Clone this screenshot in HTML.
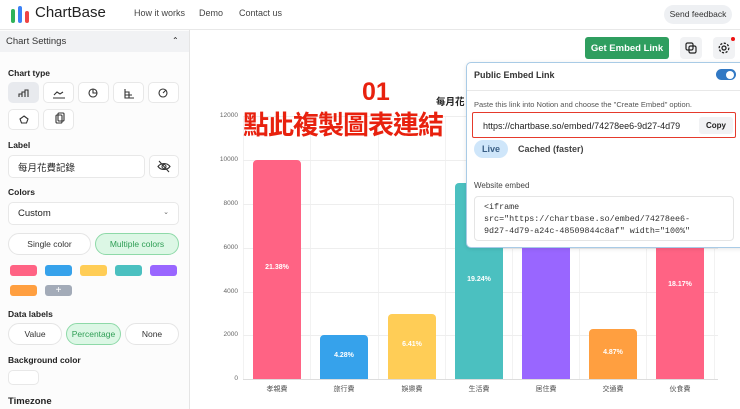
<!DOCTYPE html><html><head><meta charset="utf-8"><style>
*{box-sizing:border-box;margin:0;padding:0}
body{width:740px;height:409px;overflow:hidden;background:#fff;font-family:"Liberation Sans","Noto Sans CJK TC",sans-serif;color:#222;position:relative}
.a{position:absolute}
.hdr{top:0;left:0;width:740px;height:30px;border-bottom:1px solid #e8e8e8;background:#fff}
.nav{font-size:9px;color:#444;top:8px}
.side{top:30px;left:0;width:190px;height:379px;background:#fcfcfc;border-right:1px solid #e5e5e5}
.lbl{font-size:8.5px;font-weight:bold;color:#222;left:8px}
.box{background:#fff;border:1px solid #e8e8e8;border-radius:5px}
.ic{width:31px;height:21px}
.sw{width:27px;height:11px;border-radius:3px}
.pill{border:1px solid #e5e5e5;border-radius:12px;background:#fff;font-size:8.5px;color:#333;text-align:center;line-height:20px;height:22px}
.pg{background:#dcf7e5;border-color:#8ed9a8;color:#2f9e55}
.yl{font-size:6.5px;color:#666;text-align:right;width:30px;left:208px}
.gl{left:243px;width:475px;height:1px;background:#eee}
.vl{top:116px;width:1px;height:263px;background:#f2f2f2}
.bar{border-radius:4px 4px 0 0;color:#fff;font-size:7px;font-weight:bold;text-align:center}
.xl{font-size:7px;color:#555;top:384px;width:60px;text-align:center}
</style></head><body>
<div class="a hdr"></div>
<svg class="a" style="left:10px;top:6px" width="20" height="18"><rect x="1" y="3" width="4" height="14" rx="2" fill="#2fb35a"/><rect x="8" y="0" width="4" height="17" rx="2" fill="#3b82f6"/><rect x="15" y="5" width="4" height="12" rx="2" fill="#ef4444"/></svg>
<div class="a" style="left:35px;top:4px;font-size:15px;color:#222">ChartBase</div>
<div class="a nav" style="left:134px">How it works</div>
<div class="a nav" style="left:199px">Demo</div>
<div class="a nav" style="left:239px">Contact us</div>
<div class="a" style="left:664px;top:5px;width:68px;height:19px;border-radius:10px;background:#eef0f3;font-size:8.5px;color:#333;text-align:center;line-height:19px">Send feedback</div>

<div class="a side"></div>
<div class="a" style="left:0;top:31px;width:189px;height:21px;background:#f1f2f4"></div>
<div class="a" style="left:6px;top:36px;font-size:9.5px;color:#333">Chart Settings</div>
<div class="a" style="left:172px;top:36px;font-size:8px">&#8963;</div>
<div class="a lbl" style="top:68px">Chart type</div>
<div class="a box ic" style="left:8px;top:82px;background:#e8eaee;border-color:#e8eaee"></div>
<div class="a box ic" style="left:43px;top:82px"></div>
<div class="a box ic" style="left:78px;top:82px"></div>
<div class="a box ic" style="left:113px;top:82px"></div>
<div class="a box ic" style="left:148px;top:82px"></div>
<div class="a box ic" style="left:8px;top:109px"></div>
<div class="a box ic" style="left:43px;top:109px"></div>
<svg class="a" style="left:0;top:80px" width="190" height="55" fill="none" stroke="#333" stroke-width="1.1"><path d="M19 17v-3h3v3M22 17v-5h3v5M25 17v-7h3v7"/><path d="M54 15l3-3 3 2 3-2M53 18h12"/><circle cx="93" cy="13" r="4"/><path d="M93 9v4h4"/><path d="M125 9v9h9M125 12h4v6M125 15h7"/><circle cx="163" cy="13" r="4"/><path d="M163 13l3-3"/><path d="M24 36l4 3-1.5 4h-5L20 39z"/><rect x="56" y="35" width="6" height="8" rx="1"/><rect x="58" y="33" width="6" height="8" rx="1"/></svg>
<div class="a lbl" style="top:140px">Label</div>
<div class="a box" style="left:8px;top:155px;width:137px;height:23px;font-size:9.5px;padding:4px 9px">每月花費記錄</div>
<div class="a box" style="left:149px;top:155px;width:30px;height:23px"></div>
<svg class="a" style="left:157px;top:160px" width="14" height="13" fill="none" stroke="#333" stroke-width="1.1"><path d="M1 6.5c3-4 9-4 12 0c-3 4-9 4-12 0z"/><circle cx="7" cy="6.5" r="2"/><path d="M2 1l10 11"/></svg>
<div class="a lbl" style="top:187px">Colors</div>
<div class="a box" style="left:8px;top:202px;width:171px;height:23px;font-size:9.5px;padding:5px 9px">Custom<span style="float:right;font-size:7px;color:#666">&#8964;</span></div>
<div class="a pill" style="left:8px;top:233px;width:83px">Single color</div>
<div class="a pill pg" style="left:95px;top:233px;width:84px">Multiple colors</div>
<div class="a sw" style="left:10px;top:265px;background:#ff6384"></div>
<div class="a sw" style="left:45px;top:265px;background:#36a2eb"></div>
<div class="a sw" style="left:80px;top:265px;background:#ffcd56"></div>
<div class="a sw" style="left:115px;top:265px;background:#4bc0c0"></div>
<div class="a sw" style="left:150px;top:265px;background:#9966ff"></div>
<div class="a sw" style="left:10px;top:285px;background:#ff9f40"></div>
<div class="a sw" style="left:45px;top:285px;background:#a3abb8;color:#fff;font-size:10px;text-align:center;line-height:11px">+</div>
<div class="a lbl" style="top:309px">Data labels</div>
<div class="a pill" style="left:8px;top:323px;width:54px">Value</div>
<div class="a pill pg" style="left:66px;top:323px;width:55px">Percentage</div>
<div class="a pill" style="left:125px;top:323px;width:54px">None</div>
<div class="a lbl" style="top:355px">Background color</div>
<div class="a box" style="left:8px;top:370px;width:31px;height:15px"></div>
<div class="a lbl" style="top:396px;font-size:9.5px">Timezone</div>

<!-- chart -->
<div class="a vl" style="left:243px"></div><div class="a vl" style="left:310px"></div><div class="a vl" style="left:378px"></div><div class="a vl" style="left:445px"></div><div class="a vl" style="left:512px"></div><div class="a vl" style="left:579px"></div><div class="a vl" style="left:646px"></div><div class="a vl" style="left:714px"></div>
<div class="a gl" style="top:116px"></div><div class="a gl" style="top:160px"></div><div class="a gl" style="top:204px"></div><div class="a gl" style="top:248px"></div><div class="a gl" style="top:292px"></div><div class="a gl" style="top:335px"></div><div class="a gl" style="top:379px;background:#ddd"></div>
<div class="a yl" style="top:112px">12000</div><div class="a yl" style="top:156px">10000</div><div class="a yl" style="top:200px">8000</div><div class="a yl" style="top:244px">6000</div><div class="a yl" style="top:288px">4000</div><div class="a yl" style="top:331px">2000</div><div class="a yl" style="top:375px">0</div>
<div class="a bar" style="left:253px;top:160px;width:48px;height:219px;background:#ff6384;padding-top:104px">21.38%</div>
<div class="a bar" style="left:320px;top:335px;width:48px;height:44px;background:#36a2eb;padding-top:17px">4.28%</div>
<div class="a bar" style="left:388px;top:314px;width:48px;height:65px;background:#ffcd56;padding-top:27px">6.41%</div>
<div class="a bar" style="left:455px;top:183px;width:48px;height:196px;background:#4bc0c0;padding-top:93px">19.24%</div>
<div class="a bar" style="left:522px;top:190px;width:48px;height:189px;background:#9966ff"></div>
<div class="a bar" style="left:589px;top:329px;width:48px;height:50px;background:#ff9f40;padding-top:20px">4.87%</div>
<div class="a bar" style="left:656px;top:190px;width:48px;height:189px;background:#ff6384;padding-top:91px">18.17%</div>
<div class="a xl" style="left:247px">孝親費</div><div class="a xl" style="left:314px">旅行費</div><div class="a xl" style="left:382px">娛樂費</div><div class="a xl" style="left:449px">生活費</div><div class="a xl" style="left:516px">居住費</div><div class="a xl" style="left:583px">交通費</div><div class="a xl" style="left:650px">伙食費</div>
<div class="a" style="left:436px;top:94px;font-size:9.5px;font-weight:bold">每月花</div>
<div class="a" style="left:362px;top:78px;font-size:25px;font-weight:bold;color:#e8210e">01</div>
<div class="a" style="left:243px;top:108px;font-size:26px;font-weight:bold;color:#e8210e;letter-spacing:-1px;font-family:'Noto Sans CJK TC',sans-serif;line-height:32px">點此複製圖表連結</div>

<div class="a" style="left:585px;top:37px;width:84px;height:22px;background:#2f9e5f;border-radius:3px;color:#fff;font-size:9.5px;font-weight:bold;text-align:center;line-height:23px">Get Embed Link</div>
<div class="a" style="left:680px;top:37px;width:22px;height:22px;background:#f1f2f4;border-radius:4px"></div>
<svg class="a" style="left:685px;top:42px" width="12" height="12" fill="none" stroke="#222" stroke-width="1.2"><rect x="1" y="1" width="7" height="7" rx="1.5"/><rect x="4" y="4" width="7" height="7" rx="1.5"/></svg>
<div class="a" style="left:713px;top:37px;width:22px;height:22px;background:#f1f2f4;border-radius:4px"></div>
<svg class="a" style="left:717px;top:41px" width="14" height="14" fill="none" stroke="#222" stroke-width="1.3"><circle cx="7" cy="7" r="2"/><circle cx="7" cy="7" r="4.8" stroke-dasharray="2.2 1.5"/></svg>
<div class="a" style="left:731px;top:37px;width:4px;height:4px;background:#e11;border-radius:50%"></div>

<div class="a" style="left:466px;top:62px;width:280px;height:186px;background:#fff;border:1.5px solid #a9cbe6;border-radius:5px;box-shadow:0 1px 4px rgba(0,0,0,.1)"></div>
<div class="a" style="left:474px;top:70px;font-size:9px;font-weight:bold;color:#333">Public Embed Link</div>
<div class="a" style="left:716px;top:69px;width:20px;height:11px;border-radius:6px;background:#3279c4"><div class="a" style="left:10px;top:1.5px;width:8px;height:8px;border-radius:50%;background:#fff"></div></div>
<div class="a" style="left:467px;top:90px;width:273px;height:1px;background:#e8e8e8"></div>
<div class="a" style="left:474px;top:100px;font-size:7.5px;color:#555">Paste this link into Notion and choose the "Create Embed" option.</div>
<div class="a" style="left:472px;top:112px;width:264px;height:26px;border:1.5px solid #e53a2c;border-radius:2px"></div>
<div class="a" style="left:483px;top:121px;font-size:9px;color:#222;white-space:nowrap;width:213px;overflow:hidden">https://chartbase.so/embed/74278ee6-9d27-4d79</div>
<div class="a" style="left:699px;top:117px;width:34px;height:17px;background:#f1f2f4;border-radius:3px;font-size:8px;font-weight:bold;text-align:center;line-height:17px">Copy</div>
<div class="a" style="left:474px;top:140px;width:34px;height:18px;border-radius:9px;background:#cfe6fa;font-size:9px;font-weight:bold;color:#3a5f86;text-align:center;line-height:18px">Live</div>
<div class="a" style="left:518px;top:144px;font-size:9px;font-weight:bold;color:#444">Cached (faster)</div>
<div class="a" style="left:474px;top:181px;font-size:8px;color:#444">Website embed</div>
<div class="a" style="left:474px;top:196px;width:260px;height:45px;border:1px solid #e5e5e5;border-radius:4px;font-family:'Liberation Mono',monospace;font-size:8.4px;color:#333;padding:4px 9px;line-height:12px;white-space:pre">&lt;iframe
src="https://chartbase.so/embed/74278ee6-
9d27-4d79-a24c-48509844c8af" width="100%"</div>
</body></html>
